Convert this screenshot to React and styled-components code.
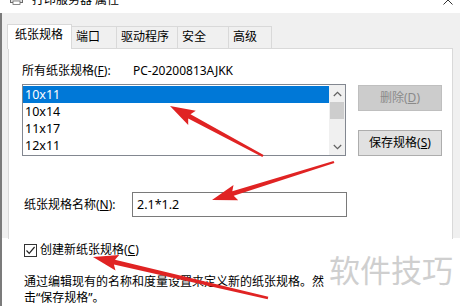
import React from "react";
import styled, { createGlobalStyle } from "styled-components";

const GlobalStyle = createGlobalStyle`
  html, body { margin: 0; padding: 0; background: #fff; }
  body {
    font-family: "Noto Sans", "Noto Sans CJK SC", sans-serif;
    font-size: 12px;
    color: #000;
    overflow: hidden;
  }
  * { box-sizing: border-box; }
`;

const Window = styled.div`
  position: relative;
  width: 460px;
  height: 306px;
  overflow: hidden;
  display: flex;
  flex-direction: column;
  background: linear-gradient(#f0f0f0, #f0f0f0) 0 0 / 100% 238px no-repeat, #fff;
`;

const TitleBar = styled.div`
  height: 13px;
  flex-shrink: 0;
  background: #fff;
  display: flex;
  align-items: flex-start;
  padding-left: 10px;
  overflow: hidden;
`;

const TitleIcon = styled.svg`
  margin-top: -8px;
  flex-shrink: 0;
`;

const TitleText = styled.span`
  margin-left: 9px;
  margin-top: -6px;
  line-height: 12px;
  font-size: 12px;
  white-space: pre;
`;

const CloseIcon = styled.svg`
  margin-left: auto;
  margin-right: 7px;
  margin-top: -5px;
`;

const Body = styled.div`
  flex: 1;
  border-left: 2px solid #7b7b7b;
  padding: 11px 7px 0 6px;
  display: flex;
  flex-direction: column;
`;

const TabRow = styled.div`
  display: flex;
  align-items: flex-end;
  height: 25px;
  margin-bottom: -1px;
  position: relative;
  z-index: 1;
`;

const Tab = styled.div`
  width: ${(p) => p.$w}px;
  height: ${(p) => (p.$active ? 25 : 22)}px;
  margin-left: ${(p) => (p.$first ? -1 : -1)}px;
  margin-bottom: ${(p) => (p.$active ? 0 : 1)}px;
  border: 1px solid #d9d9d9;
  border-bottom: none;
  background: ${(p) => (p.$active ? "#fff" : "#f0f0f0")};
  padding: 2px 0 0 ${(p) => (p.$active ? 7 : 4)}px;
  line-height: 16px;
  white-space: nowrap;
  position: relative;
  z-index: ${(p) => (p.$active ? 2 : 1)};
`;

const Panel = styled.div`
  flex: 1;
  background: #fff;
  border: 1px solid;
  border-bottom: 0;
  border-image: linear-gradient(to bottom, #d9d9d9 0, #d9d9d9 190px, transparent 190px) 1;
  padding: 14px 0 0 13px;
  display: flex;
  flex-direction: column;
`;

const HeaderRow = styled.div`
  display: flex;
  line-height: 16px;
  height: 16px;
`;

const Label = styled.span`
  width: ${(p) => p.$w}px;
  margin-left: ${(p) => p.$ml || 0}px;
  flex-shrink: 0;
  white-space: nowrap;
  line-height: 16px;
`;

const ListRow = styled.div`
  display: flex;
  gap: 12px;
  margin-top: 5px;
`;

const ListBox = styled.div`
  width: 324px;
  height: 72px;
  border: 1px solid #828790;
  display: flex;
  background: #fff;
`;

const Items = styled.div`
  flex: 1;
  padding: 1px 0;
`;

const Item = styled.div`
  height: 17px;
  line-height: 17px;
  padding-left: 2px;
  background: ${(p) => (p.$selected ? "#0078d7" : "transparent")};
  color: ${(p) => (p.$selected ? "#fff" : "#000")};
  font-size: 12.5px;
`;

const ScrollBar = styled.div`
  width: 16px;
  background: #f0f0f0;
  display: flex;
  flex-direction: column;
`;

const ScrollArrow = styled.div`
  height: 17px;
  display: flex;
  align-items: center;
  justify-content: center;
`;

const Thumb = styled.div`
  height: 17px;
  margin: 0 1px;
  background: #cdcdcd;
`;

const Spacer = styled.div`
  flex: 1;
`;

const ButtonColumn = styled.div`
  display: flex;
  flex-direction: column;
  gap: 19px;
  margin-top: 1px;
`;

const Button = styled.div`
  width: 84px;
  height: 26px;
  display: flex;
  align-items: center;
  justify-content: center;
  border: 1px solid ${(p) => (p.$disabled ? "#bfbfbf" : "#adadad")};
  background: ${(p) => (p.$disabled ? "#cccccc" : "#e1e1e1")};
  color: ${(p) => (p.$disabled ? "#8a8a8a" : "#000")};
  line-height: 16px;
`;

const NameRow = styled.div`
  display: flex;
  align-items: center;
  margin-top: 36px;
`;

const TextInput = styled.div`
  width: 215px;
  height: 25px;
  border: 1px solid #7a7a7a;
  padding-left: 4px;
  display: flex;
  align-items: center;
  line-height: 16px;
  font-size: 12.5px;
`;

const CheckRow = styled.div`
  display: flex;
  align-items: center;
  gap: 3px;
  height: 16px;
  margin-top: 25px;
  margin-left: 2px;
  line-height: 16px;
`;

const CheckBox = styled.div`
  width: 13px;
  height: 13px;
  border: 1px solid #333;
  background: #fff;
  display: flex;
  align-items: center;
  justify-content: center;
`;

const Description = styled.div`
  margin-top: 16px;
  margin-left: 2px;
  line-height: 16px;
  white-space: nowrap;
`;

const Watermark = styled.div`
  position: absolute;
  left: 329px;
  top: 253px;
  font-family: "Noto Sans CJK SC", sans-serif;
  font-size: 31px;
  line-height: 31px;
  color: #cfcfcf;
  letter-spacing: 0;
  white-space: nowrap;
`;

const Overlay = styled.svg`
  position: absolute;
  left: 0;
  top: 0;
  pointer-events: none;
  z-index: 5;
`;

function arrowPoints(x1, y1, x2, y2) {
  const dx = x2 - x1;
  const dy = y2 - y1;
  const len = Math.hypot(dx, dy);
  const ux = dx / len;
  const uy = dy / len;
  const nx = -uy;
  const ny = ux;
  const headLen = 22;
  const neckX = x2 - ux * headLen;
  const neckY = y2 - uy * headLen;
  const tailW = 1.2;
  const shaftW = 2.4;
  const headW = 8;
  const pts = [
    [x1 + nx * tailW, y1 + ny * tailW],
    [neckX + nx * shaftW, neckY + ny * shaftW],
    [neckX - ux * 3 + nx * headW, neckY - uy * 3 + ny * headW],
    [x2, y2],
    [neckX - ux * 3 - nx * headW, neckY - uy * 3 - ny * headW],
    [neckX - nx * shaftW, neckY - ny * shaftW],
    [x1 - nx * tailW, y1 - ny * tailW],
  ];
  return pts.map((p) => p.map((v) => v.toFixed(1)).join(",")).join(" ");
}

const arrows = [
  [263, 156, 170, 106],
  [334, 162, 212, 200],
  [268, 298, 93, 257],
];

const tabs = [
  { label: "纸张规格", w: 65, active: true },
  { label: "端口", w: 46 },
  { label: "驱动程序", w: 62 },
  { label: "安全", w: 52 },
  { label: "高级", w: 44 },
];

const sizes = ["10x11", "10x14", "11x17", "12x11"];

export default function App() {
  return (
    <>
      <GlobalStyle />
      <Window>
        <TitleBar>
          <TitleIcon width="13" height="13" viewBox="0 0 13 13">
            <rect x="0.5" y="4.5" width="12" height="6" fill="#e6e6e6" stroke="#6a6a6a" />
            <rect x="3" y="9" width="7" height="3.5" fill="#fff" stroke="#6a6a6a" strokeWidth="0.8" />
          </TitleIcon>
          <TitleText>打印服务器 属性</TitleText>
          <CloseIcon width="10" height="10" viewBox="0 0 10 10">
            <path d="M0.5 0.5 L9.5 9.5 M9.5 0.5 L0.5 9.5" stroke="#333" strokeWidth="1" fill="none" />
          </CloseIcon>
        </TitleBar>
        <Body>
          <TabRow>
            {tabs.map((t, i) => (
              <Tab key={t.label} $w={t.w} $active={t.active} $first={i === 0}>
                {t.label}
              </Tab>
            ))}
          </TabRow>
          <Panel>
            <HeaderRow>
              <Label $w={111}>
                所有纸张规格(<u>F</u>):
              </Label>
              <span>PC-20200813AJKK</span>
            </HeaderRow>
            <ListRow>
              <ListBox>
                <Items>
                  {sizes.map((s, i) => (
                    <Item key={s} $selected={i === 0}>
                      {s}
                    </Item>
                  ))}
                </Items>
                <ScrollBar>
                  <ScrollArrow>
                    <svg width="9" height="6" viewBox="0 0 9 6">
                      <path d="M0.8 5 L4.5 1.3 L8.2 5" stroke="#606060" strokeWidth="1.2" fill="none" />
                    </svg>
                  </ScrollArrow>
                  <Thumb />
                  <Spacer />
                  <ScrollArrow>
                    <svg width="9" height="6" viewBox="0 0 9 6">
                      <path d="M0.8 1 L4.5 4.7 L8.2 1" stroke="#606060" strokeWidth="1.2" fill="none" />
                    </svg>
                  </ScrollArrow>
                </ScrollBar>
              </ListBox>
              <ButtonColumn>
                <Button $disabled>
                  删除(<u>D</u>)
                </Button>
                <Button>
                  保存规格(<u>S</u>)
                </Button>
              </ButtonColumn>
            </ListRow>
            <NameRow>
              <Label $w={108} $ml={2}>
                纸张规格名称(<u>N</u>):
              </Label>
              <TextInput>2.1*1.2</TextInput>
            </NameRow>
            <CheckRow>
              <CheckBox>
                <svg width="11" height="11" viewBox="0 0 11 11">
                  <path d="M1.5 5.5 L4.2 8.3 L9.6 2" stroke="#222" strokeWidth="1.2" fill="none" />
                </svg>
              </CheckBox>
              <span>
                创建新纸张规格(<u>C</u>)
              </span>
            </CheckRow>
            <Description>
              通过编辑现有的名称和度量设置来定义新的纸张规格。然
              <br />
              击“保存规格”。
            </Description>
          </Panel>
        </Body>
        <Watermark>软件技巧</Watermark>
        <Overlay width="460" height="306" viewBox="0 0 460 306">
          {arrows.map((a, i) => (
            <polygon key={i} points={arrowPoints(...a)} fill="#e02323" />
          ))}
        </Overlay>
      </Window>
    </>
  );
}
